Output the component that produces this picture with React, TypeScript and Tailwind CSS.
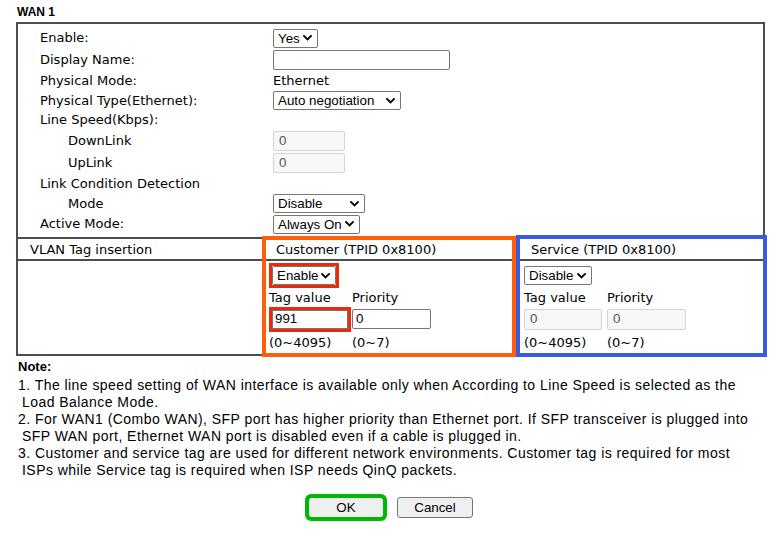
import React from "react";

const Chevron = () => (
  <svg width="9" height="6" viewBox="0 0 9 6" className="shrink-0">
    <path d="M1 1L4.5 4.5L8 1" fill="none" stroke="#000" strokeWidth="1.9" strokeLinecap="square" />
  </svg>
);

function Sel({ text, w }: { text: string; w: string }) {
  return (
    <div
      className={`flex items-center justify-between h-[19px] border border-[#767676] rounded-[2px] pl-[4px] pr-[5px] bg-white text-[13.33px] leading-[15px] font-['Liberation_Sans',sans-serif] text-black ${w}`}
    >
      <span>{text}</span>
      <Chevron />
    </div>
  );
}

function DisInput({ w, h }: { w: string; h: string }) {
  return (
    <div
      className={`flex items-center border border-[#d4d4d4] rounded-[2px] bg-[#f7f7f7] pl-[5px] text-[13.33px] font-['Liberation_Sans',sans-serif] text-[#555] ${w} ${h}`}
    >
      0
    </div>
  );
}

function Row({ h, label, indent, children }: { h: string; label: string; indent?: boolean; children?: React.ReactNode }) {
  return (
    <div className={`flex items-center ${h}`}>
      <div className={`w-[255px] shrink-0 ${indent ? "pl-[50px]" : "pl-[22px]"}`}>{label}</div>
      <div className="flex items-center">{children}</div>
    </div>
  );
}

export default function App() {
  return (
    <div className="w-[783px] h-[544px] bg-white text-black font-['DejaVu_Sans',sans-serif] text-[13px] overflow-hidden">
      <div className="h-[22px] pl-[17px] pt-[5px] text-[12px] leading-[14px] font-bold font-['Liberation_Sans',sans-serif]">
        WAN 1
      </div>
      <div className="relative ml-[16px] w-[749px] h-[334px] border-2 border-[#4d4d4d] flex flex-col">
        <div className="pt-[3px] pb-[2px] leading-[16px]">
          <Row h="h-[22px]" label="Enable:">
            <Sel text="Yes" w="w-[45px]" />
          </Row>
          <Row h="h-[22px]" label="Display Name:">
            <div className="w-[177px] h-[20px] border border-[#767676] rounded-[2px] bg-white" />
          </Row>
          <Row h="h-[20px]" label="Physical Mode:">
            <span>Ethernet</span>
          </Row>
          <Row h="h-[19px]" label="Physical Type(Ethernet):">
            <Sel text="Auto negotiation" w="w-[128px]" />
          </Row>
          <Row h="h-[20px]" label="Line Speed(Kbps):" />
          <Row h="h-[21px]" label="DownLink" indent>
            <DisInput w="w-[72px]" h="h-[20px]" />
          </Row>
          <Row h="h-[23px]" label="UpLink" indent>
            <DisInput w="w-[72px]" h="h-[20px]" />
          </Row>
          <Row h="h-[20px]" label="Link Condition Detection" />
          <Row h="h-[19px]" label="Mode" indent>
            <Sel text="Disable" w="w-[92px]" />
          </Row>
          <Row h="h-[22px]" label="Active Mode:">
            <Sel text="Always On" w="w-[87px]" />
          </Row>
        </div>

        {/* VLAN header */}
        <div className="flex h-[24px] border-y-2 border-[#4d4d4d] items-center leading-[16px] pt-[1px]">
          <div className="w-[244px] pl-[12px]">VLAN Tag insertion</div>
          <div className="w-[254px] pl-[14px]">Customer (TPID 0x8100)</div>
          <div className="flex-1 pl-[15px]">Service (TPID 0x8100)</div>
        </div>

        {/* VLAN body */}
        <div className="flex flex-1 leading-[16px]">
          <div className="w-[244px]" />
          <div className="w-[254px] pl-[7px] pt-[2px]">
            <div className="h-[25px] flex items-center">
              <div className="border-[3px] border-[#ea2a0a]">
                <Sel text="Enable" w="w-[64px]" />
              </div>
            </div>
            <div className="grid grid-cols-[83px_83px] h-[18px] items-center pt-[1px]">
              <span>Tag value</span>
              <span>Priority</span>
            </div>
            <div className="grid grid-cols-[83px_83px] h-[26px] items-center">
              <div className="border-[3px] border-[#ea2a0a] w-[82px]">
                <div className="h-[19px] bg-white border border-[#767676] flex items-center pl-[2px] text-[13.33px] font-['Liberation_Sans',sans-serif]">
                  991
                </div>
              </div>
              <div className="w-[79px] h-[20px] border border-[#767676] rounded-[2px] bg-white flex items-center pl-[3px] text-[13.33px] font-['Liberation_Sans',sans-serif]">
                0
              </div>
            </div>
            <div className="grid grid-cols-[83px_83px] h-[20px] items-center pt-[1px]">
              <span>(0~4095)</span>
              <span>(0~7)</span>
            </div>
          </div>
          <div className="flex-1 pl-[8px] pt-[2px]">
            <div className="h-[25px] flex items-center">
              <Sel text="Disable" w="w-[68px]" />
            </div>
            <div className="grid grid-cols-[83px_83px] h-[18px] items-center pt-[1px]">
              <span>Tag value</span>
              <span>Priority</span>
            </div>
            <div className="grid grid-cols-[83px_83px] h-[26px] items-center">
              <DisInput w="w-[78px]" h="h-[21px]" />
              <DisInput w="w-[79px]" h="h-[21px]" />
            </div>
            <div className="grid grid-cols-[83px_83px] h-[20px] items-center pt-[1px]">
              <span>(0~4095)</span>
              <span>(0~7)</span>
            </div>
          </div>
        </div>

        {/* annotation boxes */}
        <div className="absolute left-[244px] top-[212px] w-[254px] h-[121px] border-4 border-[#ff5f0a] pointer-events-none" />
        <div className="absolute left-[498px] top-[211px] w-[251px] h-[122px] border-4 border-[#3b5be2] pointer-events-none" />
      </div>

      <div className="pl-[18px] mt-[3px] font-['Liberation_Sans',sans-serif]">
        <div className="font-bold leading-[16px] text-[13px]">Note:</div>
        <div className="mt-[2px] w-[747px] leading-[16.5px] flex flex-col gap-[1px] text-[14px] tracking-[0.45px]">
          <p className="pl-[4px] -indent-[4px]">
            1. The line speed setting of WAN interface is available only when According to Line Speed is selected as the Load Balance Mode.
          </p>
          <p className="pl-[4px] -indent-[4px]">
            2. For WAN1 (Combo WAN), SFP port has higher priority than Ethernet port. If SFP transceiver is plugged into SFP WAN port, Ethernet WAN port is disabled even if a cable is plugged in.
          </p>
          <p className="pl-[4px] -indent-[4px]">
            3. Customer and service tag are used for different network environments. Customer tag is required for most ISPs while Service tag is required when ISP needs QinQ packets.
          </p>
        </div>
      </div>

      <div className="flex justify-center gap-[13px] mt-[19px] pr-[2px] font-['Liberation_Sans',sans-serif] text-[13.33px]">
        <button className="w-[76px] h-[21px] bg-[#efefef] border border-[#767676] rounded-[3px] outline-[4px] outline-solid outline-[#00b900] -outline-offset-[1px]">
          OK
        </button>
        <button className="w-[76px] h-[21px] bg-[#efefef] border border-[#767676] rounded-[3px]">
          Cancel
        </button>
      </div>
    </div>
  );
}
